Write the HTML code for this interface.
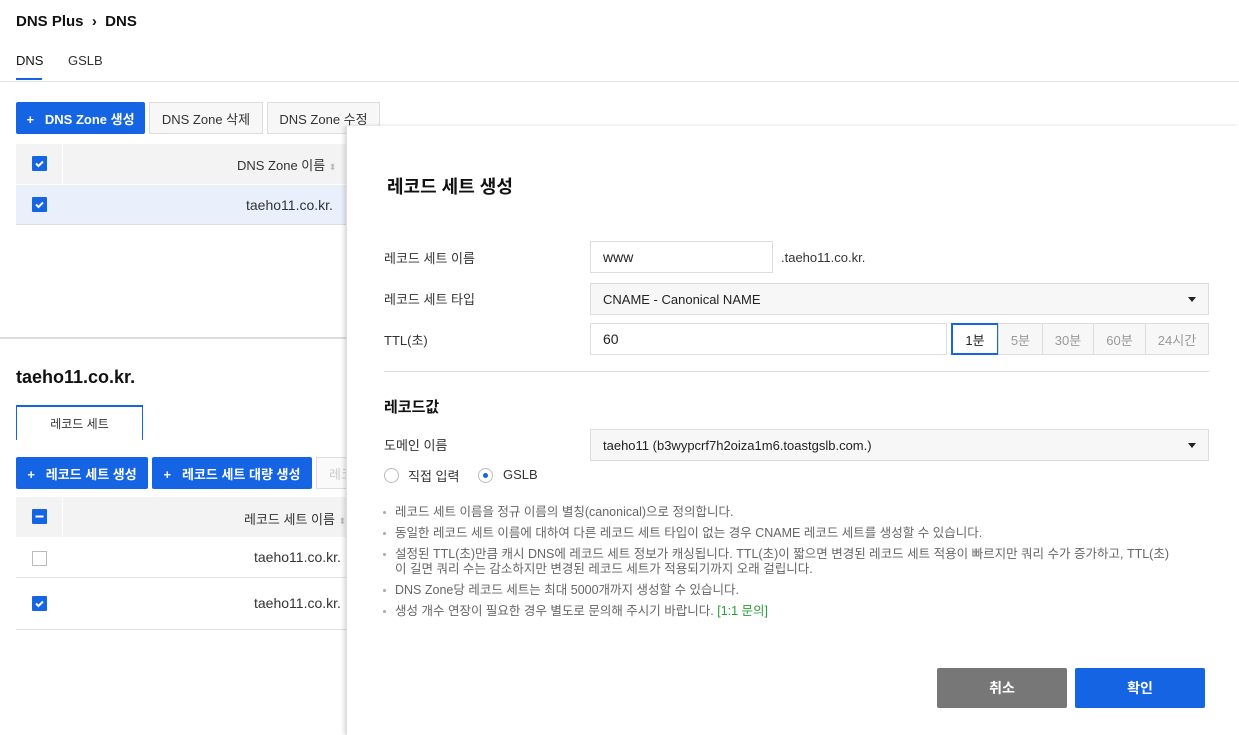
<!DOCTYPE html>
<html><head><meta charset="utf-8"><style>
*{box-sizing:border-box;margin:0;padding:0}
body{width:1239px;height:735px;overflow:hidden;background:#fff;font-family:"Liberation Sans","Noto Sans CJK KR",sans-serif;color:#333;font-size:13px;position:relative}
.a{position:absolute}
.btnb{position:absolute;background:#1464e4;color:#fff;font-weight:bold;font-size:13px;border-radius:2px;display:flex;align-items:center;justify-content:center}
.btng{position:absolute;background:#f7f7f7;border:1px solid #ddd;color:#333;font-size:13px;display:flex;align-items:center;justify-content:center}
.cb{position:absolute;width:15px;height:15px;background:#1464e4;border-radius:1px}
.cb svg{display:block}
.inp{position:absolute;border:1px solid #ddd;height:32px;display:flex;align-items:center;padding-left:12px;font-size:14px;color:#222}
.sel{background:#f7f7f7}
.sel::after{content:"";position:absolute;right:12px;top:13px;border:4px solid transparent;border-top:5px solid #222}
.lbl{position:absolute;font-size:13px;color:#333}
.ttl{position:absolute;top:323px;height:32px;border:1px solid #ddd;background:#f7f7f7;color:#999;font-size:13px;display:flex;align-items:center;justify-content:center}
.note{position:absolute;left:384px;font-size:12.5px;color:#666;line-height:15px}
.note::before{content:"";position:absolute;left:-1px;top:6px;width:3px;height:3px;background:#aaa;border-radius:50%}
.note span{padding-left:11px;display:block}
</style></head><body>
<div class="a" style="left:16px;top:13px;font-size:15px;font-weight:bold;color:#111">DNS Plus &nbsp;›&nbsp; DNS</div>
<div class="a" style="left:16px;top:53px;font-size:13px;color:#111">DNS</div>
<div class="a" style="left:16px;top:78px;width:26px;height:2px;background:#1464e4"></div>
<div class="a" style="left:68px;top:53px;font-size:13px;color:#333">GSLB</div>
<div class="a" style="left:0;top:81px;width:1239px;height:1px;background:#e5e5e5"></div>

<div class="btnb" style="left:16px;top:102px;width:129px;height:32px">+&nbsp;&nbsp; DNS Zone 생성</div>
<div class="btng" style="left:149px;top:102px;width:114px;height:32px">DNS Zone 삭제</div>
<div class="btng" style="left:267px;top:102px;width:113px;height:32px">DNS Zone 수정</div>

<div class="a" style="left:16px;top:144px;width:340px;height:40px;background:#f3f3f3"></div>
<div class="a" style="left:62px;top:144px;width:1px;height:81px;background:#fff"></div>
<div class="a" style="left:16px;top:185px;width:340px;height:40px;background:#e9f0fc;border-bottom:1px solid #ddd"></div>
<div class="cb" style="left:32px;top:156px"><svg width="15" height="15"><path d="M4 7.5l2.5 2.5 4.5-4.5" stroke="#fff" stroke-width="2" fill="none"/></svg></div>
<div class="cb" style="left:32px;top:197px"><svg width="15" height="15"><path d="M4 7.5l2.5 2.5 4.5-4.5" stroke="#fff" stroke-width="2" fill="none"/></svg></div>
<div class="a" style="left:237px;top:155px;font-size:13px">DNS Zone 이름 <span style="color:#bbb;font-size:9px">⬍</span></div>
<div class="a" style="left:246px;top:197px;font-size:14px">taeho11.co.kr.</div>

<div class="a" style="left:0;top:337px;width:350px;height:2px;background:#ddd"></div>
<div class="a" style="left:16px;top:367px;font-size:18px;font-weight:bold;color:#111">taeho11.co.kr.</div>
<div class="a" style="left:16px;top:405px;width:127px;height:35px;border:1px solid #1464e4;border-bottom:none;border-top:2px solid #1464e4;font-size:12px;display:flex;align-items:center;justify-content:center">레코드 세트</div>

<div class="btnb" style="left:16px;top:457px;width:132px;height:32px">+&nbsp;&nbsp; 레코드 세트 생성</div>
<div class="btnb" style="left:152px;top:457px;width:160px;height:32px">+&nbsp;&nbsp; 레코드 세트 대량 생성</div>
<div class="btng" style="left:316px;top:457px;width:40px;height:32px;color:#ccc;background:#fafafa;justify-content:flex-start;padding-left:12px">레코</div>

<div class="a" style="left:16px;top:497px;width:340px;height:40px;background:#f3f3f3"></div>
<div class="a" style="left:62px;top:497px;width:1px;height:40px;background:#fff"></div>
<div class="cb" style="left:32px;top:509px"><svg width="15" height="15"><path d="M3.5 7.5h8" stroke="#fff" stroke-width="2"/></svg></div>
<div class="a" style="left:244px;top:509px;font-size:13px">레코드 세트 이름 <span style="color:#bbb;font-size:9px">⬍</span></div>
<div class="a" style="left:32px;top:551px;width:15px;height:15px;border:1px solid #bbb;background:#fff"></div>
<div class="a" style="left:254px;top:549px;font-size:14px">taeho11.co.kr.</div>
<div class="a" style="left:16px;top:577px;width:340px;height:1px;background:#e5e5e5"></div>
<div class="cb" style="left:32px;top:596px"><svg width="15" height="15"><path d="M4 7.5l2.5 2.5 4.5-4.5" stroke="#fff" stroke-width="2" fill="none"/></svg></div>
<div class="a" style="left:254px;top:595px;font-size:14px">taeho11.co.kr.</div>
<div class="a" style="left:16px;top:629px;width:340px;height:1px;background:#ddd"></div>

<!-- modal -->
<div class="a" style="left:346px;top:126px;width:893px;height:609px;background:#fff;box-shadow:-2px 0 4px rgba(0,0,0,.15);border-left:1px solid #ddd"></div>
<div class="a" style="left:387px;top:173px;font-size:18px;font-weight:bold;color:#111">레코드 세트 생성</div>

<div class="lbl" style="left:384px;top:248px">레코드 세트 이름</div>
<div class="inp" style="left:590px;top:241px;width:183px">www</div>
<div class="a" style="left:781px;top:250px;font-size:13px">.taeho11.co.kr.</div>

<div class="lbl" style="left:384px;top:289px">레코드 세트 타입</div>
<div class="inp sel" style="left:590px;top:283px;width:619px;font-size:13px">CNAME - Canonical NAME</div>

<div class="lbl" style="left:384px;top:330px">TTL(초)</div>
<div class="inp" style="left:590px;top:323px;width:357px">60</div>
<div class="ttl" style="left:951px;width:48px;background:#fff;border:2px solid #1464e4;color:#222">1분</div>
<div class="ttl" style="left:998px;width:45px">5분</div>
<div class="ttl" style="left:1042px;width:52px">30분</div>
<div class="ttl" style="left:1093px;width:53px">60분</div>
<div class="ttl" style="left:1145px;width:64px">24시간</div>

<div class="a" style="left:384px;top:371px;width:825px;height:1px;background:#ddd"></div>
<div class="a" style="left:384px;top:396px;font-size:15px;font-weight:bold;color:#111">레코드값</div>

<div class="lbl" style="left:384px;top:435px">도메인 이름</div>
<div class="inp sel" style="left:590px;top:429px;width:619px;font-size:13px">taeho11 (b3wypcrf7h2oiza1m6.toastgslb.com.)</div>

<div class="a" style="left:384px;top:468px;width:15px;height:15px;border:1px solid #bbb;border-radius:50%"></div>
<div class="a" style="left:408px;top:466px;font-size:13px">직접 입력</div>
<div class="a" style="left:478px;top:468px;width:15px;height:15px;border:1px solid #bbb;border-radius:50%"><div style="position:absolute;left:4px;top:4px;width:5px;height:5px;background:#1464e4;border-radius:50%"></div></div>
<div class="a" style="left:503px;top:467px;font-size:13px">GSLB</div>

<div class="note" style="top:505px"><span>레코드 세트 이름을 정규 이름의 별칭(canonical)으로 정의합니다.</span></div>
<div class="note" style="top:526px"><span>동일한 레코드 세트 이름에 대하여 다른 레코드 세트 타입이 없는 경우 CNAME 레코드 세트를 생성할 수 있습니다.</span></div>
<div class="note" style="top:547px"><span>설정된 TTL(초)만큼 캐시 DNS에 레코드 세트 정보가 캐싱됩니다. TTL(초)이 짧으면 변경된 레코드 세트 적용이 빠르지만 쿼리 수가 증가하고, TTL(초)<br>이 길면 쿼리 수는 감소하지만 변경된 레코드 세트가 적용되기까지 오래 걸립니다.</span></div>
<div class="note" style="top:583px"><span>DNS Zone당 레코드 세트는 최대 5000개까지 생성할 수 있습니다.</span></div>
<div class="note" style="top:604px"><span>생성 개수 연장이 필요한 경우 별도로 문의해 주시기 바랍니다. <b style="font-weight:normal;color:#2a9d3a">[1:1 문의]</b></span></div>

<div class="a" style="left:937px;top:668px;width:130px;height:40px;background:#777;color:#fff;font-size:14px;font-weight:bold;display:flex;align-items:center;justify-content:center;border-radius:2px">취소</div>
<div class="a" style="left:1075px;top:668px;width:130px;height:40px;background:#1464e4;color:#fff;font-size:14px;font-weight:bold;display:flex;align-items:center;justify-content:center;border-radius:2px">확인</div>
</body></html>
